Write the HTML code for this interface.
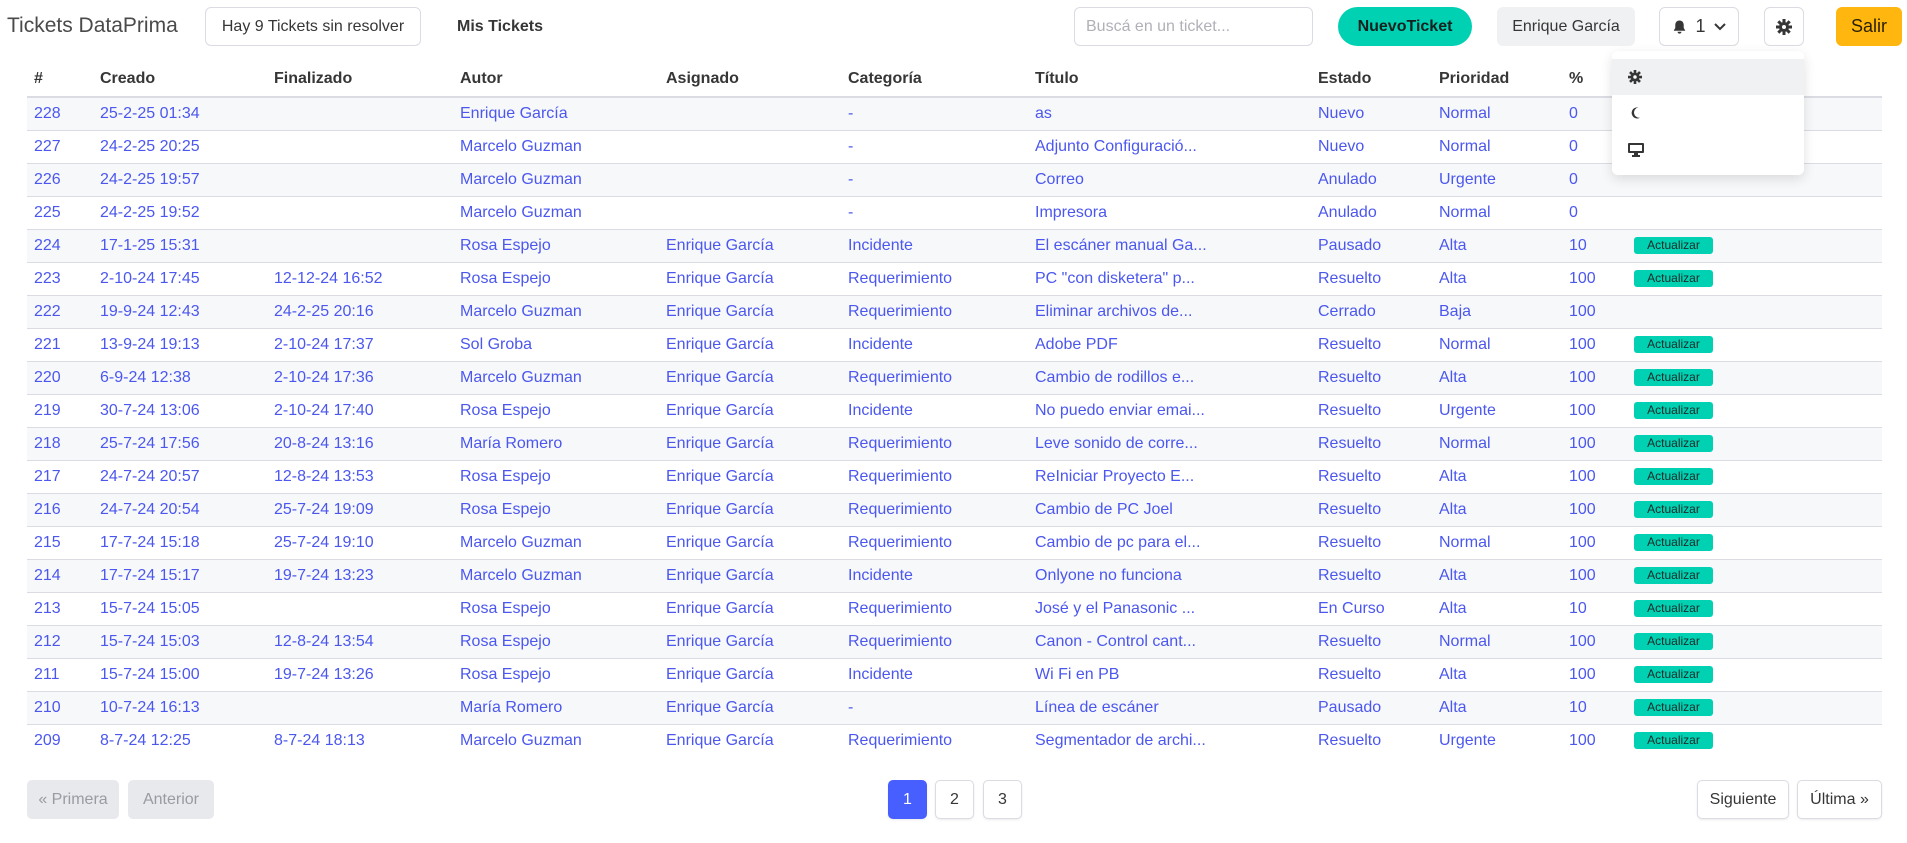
<!DOCTYPE html>
<html><head><meta charset="utf-8"><style>
*{box-sizing:border-box;margin:0;padding:0}
body{width:1907px;height:843px;background:#fff;font-family:"Liberation Sans",sans-serif;color:#363636;position:relative;overflow:hidden;font-size:16px}
.a{position:absolute}
.btn{position:absolute;top:7px;height:39px;display:flex;align-items:center;justify-content:center;border-radius:6px;font-size:16px}
table{position:absolute;left:27px;top:61px;border-collapse:collapse;table-layout:fixed;width:1855px}
td,th{padding:0 0 0 7px;text-align:left;white-space:nowrap;overflow:hidden;height:33px;font-size:16px}
th{font-weight:bold;color:#363636;height:36px;border-bottom:2px solid #dbdbe3}
td{color:#4b57ee;border-bottom:1px solid #dbdbe3}
tr:nth-child(even) td{background:#f7f8fa}
.bd{display:inline-block;background:#00d1b2;color:#1a2a28;font-size:12px;border-radius:3px;width:79px;height:17px;line-height:17px;text-align:center;vertical-align:middle}
.pg{position:absolute;top:780px;height:39px;display:flex;align-items:center;justify-content:center;border-radius:5px;font-size:16px;border:1px solid #dbdbe3;color:#363636;background:#fff;box-shadow:0 1px 2px rgba(0,0,0,.08)}
</style></head><body>
<div class="a" style="left:7px;top:14px;font-size:21px;color:#4a4a4a">Tickets DataPrima</div>
<div class="btn" style="left:205px;width:216px;border:1px solid #dbdbe3">Hay 9 Tickets sin resolver</div>
<div class="a" style="left:457px;top:18px;font-weight:bold;font-size:16px">Mis Tickets</div>
<div class="btn" style="left:1074px;width:239px;border:1px solid #dbdbe3;justify-content:flex-start;padding-left:11px;color:#b0b0b8">Buscá en un ticket...</div>
<div class="btn" style="left:1338px;width:134px;border-radius:20px;background:#00d1b2;font-weight:bold;color:#15211f;font-size:16px">NuevoTicket</div>
<div class="btn" style="left:1497px;width:138px;background:#f0f1f3">Enrique García</div>
<div class="btn" style="left:1659px;width:80px;border:1px solid #dbdbe3;gap:8px">
<svg width="15" height="16" viewBox="0 0 16 16"><path d="M8 1c-2.8 0-4.5 2-4.5 5v3L2 11.5V12h12v-.5L12.5 9V6C12.5 3 10.8 1 8 1zM6 13a2 2 0 0 0 4 0z" fill="#363636"/></svg><span style="font-size:18px">1</span>
<svg width="12" height="8" viewBox="0 0 12 8"><path d="M1 1l5 5 5-5" stroke="#363636" stroke-width="2" fill="none"/></svg></div>
<div class="btn" style="left:1764px;width:40px;border:1px solid #dbdbe3">
<svg width="16" height="16" viewBox="0 0 16 16"><circle cx="8" cy="8" r="5" fill="#363636"/><g stroke="#363636" stroke-width="3"><path d="M8 0v16M0 8h16M2.3 2.3l11.4 11.4M13.7 2.3L2.3 13.7"/></g><circle cx="8" cy="8" r="2" fill="#fff"/></svg></div>
<div class="btn" style="left:1836px;width:66px;background:#ffb70f;color:#2a2000;font-size:18px">Salir</div>
<table>
<colgroup><col style="width:66px"><col style="width:174px"><col style="width:186px"><col style="width:206px"><col style="width:182px"><col style="width:187px"><col style="width:283px"><col style="width:121px"><col style="width:130px"><col style="width:65px"><col style="width:255px"></colgroup>
<tr><th>#</th><th>Creado</th><th>Finalizado</th><th>Autor</th><th>Asignado</th><th>Categoría</th><th>Título</th><th>Estado</th><th>Prioridad</th><th>%</th><th></th></tr>
<tr><td>228</td><td>25-2-25 01:34</td><td></td><td>Enrique García</td><td></td><td>-</td><td>as</td><td>Nuevo</td><td>Normal</td><td>0</td><td></td></tr>
<tr><td>227</td><td>24-2-25 20:25</td><td></td><td>Marcelo Guzman</td><td></td><td>-</td><td>Adjunto Configuració...</td><td>Nuevo</td><td>Normal</td><td>0</td><td></td></tr>
<tr><td>226</td><td>24-2-25 19:57</td><td></td><td>Marcelo Guzman</td><td></td><td>-</td><td>Correo</td><td>Anulado</td><td>Urgente</td><td>0</td><td></td></tr>
<tr><td>225</td><td>24-2-25 19:52</td><td></td><td>Marcelo Guzman</td><td></td><td>-</td><td>Impresora</td><td>Anulado</td><td>Normal</td><td>0</td><td></td></tr>
<tr><td>224</td><td>17-1-25 15:31</td><td></td><td>Rosa Espejo</td><td>Enrique García</td><td>Incidente</td><td>El escáner manual Ga...</td><td>Pausado</td><td>Alta</td><td>10</td><td><span class="bd">Actualizar</span></td></tr>
<tr><td>223</td><td>2-10-24 17:45</td><td>12-12-24 16:52</td><td>Rosa Espejo</td><td>Enrique García</td><td>Requerimiento</td><td>PC "con disketera" p...</td><td>Resuelto</td><td>Alta</td><td>100</td><td><span class="bd">Actualizar</span></td></tr>
<tr><td>222</td><td>19-9-24 12:43</td><td>24-2-25 20:16</td><td>Marcelo Guzman</td><td>Enrique García</td><td>Requerimiento</td><td>Eliminar archivos de...</td><td>Cerrado</td><td>Baja</td><td>100</td><td></td></tr>
<tr><td>221</td><td>13-9-24 19:13</td><td>2-10-24 17:37</td><td>Sol Groba</td><td>Enrique García</td><td>Incidente</td><td>Adobe PDF</td><td>Resuelto</td><td>Normal</td><td>100</td><td><span class="bd">Actualizar</span></td></tr>
<tr><td>220</td><td>6-9-24 12:38</td><td>2-10-24 17:36</td><td>Marcelo Guzman</td><td>Enrique García</td><td>Requerimiento</td><td>Cambio de rodillos e...</td><td>Resuelto</td><td>Alta</td><td>100</td><td><span class="bd">Actualizar</span></td></tr>
<tr><td>219</td><td>30-7-24 13:06</td><td>2-10-24 17:40</td><td>Rosa Espejo</td><td>Enrique García</td><td>Incidente</td><td>No puedo enviar emai...</td><td>Resuelto</td><td>Urgente</td><td>100</td><td><span class="bd">Actualizar</span></td></tr>
<tr><td>218</td><td>25-7-24 17:56</td><td>20-8-24 13:16</td><td>María Romero</td><td>Enrique García</td><td>Requerimiento</td><td>Leve sonido de corre...</td><td>Resuelto</td><td>Normal</td><td>100</td><td><span class="bd">Actualizar</span></td></tr>
<tr><td>217</td><td>24-7-24 20:57</td><td>12-8-24 13:53</td><td>Rosa Espejo</td><td>Enrique García</td><td>Requerimiento</td><td>ReIniciar Proyecto E...</td><td>Resuelto</td><td>Alta</td><td>100</td><td><span class="bd">Actualizar</span></td></tr>
<tr><td>216</td><td>24-7-24 20:54</td><td>25-7-24 19:09</td><td>Rosa Espejo</td><td>Enrique García</td><td>Requerimiento</td><td>Cambio de PC Joel</td><td>Resuelto</td><td>Alta</td><td>100</td><td><span class="bd">Actualizar</span></td></tr>
<tr><td>215</td><td>17-7-24 15:18</td><td>25-7-24 19:10</td><td>Marcelo Guzman</td><td>Enrique García</td><td>Requerimiento</td><td>Cambio de pc para el...</td><td>Resuelto</td><td>Normal</td><td>100</td><td><span class="bd">Actualizar</span></td></tr>
<tr><td>214</td><td>17-7-24 15:17</td><td>19-7-24 13:23</td><td>Marcelo Guzman</td><td>Enrique García</td><td>Incidente</td><td>Onlyone no funciona</td><td>Resuelto</td><td>Alta</td><td>100</td><td><span class="bd">Actualizar</span></td></tr>
<tr><td>213</td><td>15-7-24 15:05</td><td></td><td>Rosa Espejo</td><td>Enrique García</td><td>Requerimiento</td><td>José y el Panasonic ...</td><td>En Curso</td><td>Alta</td><td>10</td><td><span class="bd">Actualizar</span></td></tr>
<tr><td>212</td><td>15-7-24 15:03</td><td>12-8-24 13:54</td><td>Rosa Espejo</td><td>Enrique García</td><td>Requerimiento</td><td>Canon - Control cant...</td><td>Resuelto</td><td>Normal</td><td>100</td><td><span class="bd">Actualizar</span></td></tr>
<tr><td>211</td><td>15-7-24 15:00</td><td>19-7-24 13:26</td><td>Rosa Espejo</td><td>Enrique García</td><td>Incidente</td><td>Wi Fi en PB</td><td>Resuelto</td><td>Alta</td><td>100</td><td><span class="bd">Actualizar</span></td></tr>
<tr><td>210</td><td>10-7-24 16:13</td><td></td><td>María Romero</td><td>Enrique García</td><td>-</td><td>Línea de escáner</td><td>Pausado</td><td>Alta</td><td>10</td><td><span class="bd">Actualizar</span></td></tr>
<tr><td style="border:0">209</td><td style="border:0">8-7-24 12:25</td><td style="border:0">8-7-24 18:13</td><td style="border:0">Marcelo Guzman</td><td style="border:0">Enrique García</td><td style="border:0">Requerimiento</td><td style="border:0">Segmentador de archi...</td><td style="border:0">Resuelto</td><td style="border:0">Urgente</td><td style="border:0">100</td><td style="border:0"><span class="bd">Actualizar</span></td></tr>
</table>
<div class="a" style="left:1612px;top:51px;width:192px;height:124px;background:#fff;border-radius:6px;box-shadow:0 4px 12px rgba(0,0,0,.12)">
<div style="position:absolute;top:8px;left:0;right:0;height:36px;background:#f0f1f3"></div>
<svg class="a" style="left:16px;top:19px" width="14" height="14" viewBox="0 0 16 16"><circle cx="8" cy="8" r="5" fill="#363636"/><g stroke="#363636" stroke-width="3"><path d="M8 0v16M0 8h16M2.3 2.3l11.4 11.4M13.7 2.3L2.3 13.7"/></g><circle cx="8" cy="8" r="2" fill="#fff"/></svg>
<svg class="a" style="left:17px;top:55px" width="13" height="14" viewBox="0 0 14 14"><path d="M10 1A6 6 0 1 0 12 12A5 5 0 0 1 10 1z" fill="#363636"/></svg>
<svg class="a" style="left:16px;top:92px" width="16" height="14" viewBox="0 0 16 14"><rect x="0" y="0" width="16" height="10" rx="1" fill="#363636"/><rect x="2" y="2" width="12" height="6" fill="#fff"/><rect x="6" y="10" width="4" height="2" fill="#363636"/><rect x="4" y="12" width="8" height="2" fill="#363636"/></svg>
</div>
<div class="pg" style="left:27px;width:92px;background:#e8e9ec;border-color:#e8e9ec;color:#9a9aa3;box-shadow:none">« Primera</div>
<div class="pg" style="left:128px;width:86px;background:#e8e9ec;border-color:#e8e9ec;color:#9a9aa3;box-shadow:none">Anterior</div>
<div class="pg" style="left:888px;width:39px;background:#485fff;border-color:#485fff;color:#fff">1</div>
<div class="pg" style="left:935px;width:39px">2</div>
<div class="pg" style="left:983px;width:39px">3</div>
<div class="pg" style="left:1697px;width:92px">Siguiente</div>
<div class="pg" style="left:1797px;width:85px">Última »</div>
</body></html>
